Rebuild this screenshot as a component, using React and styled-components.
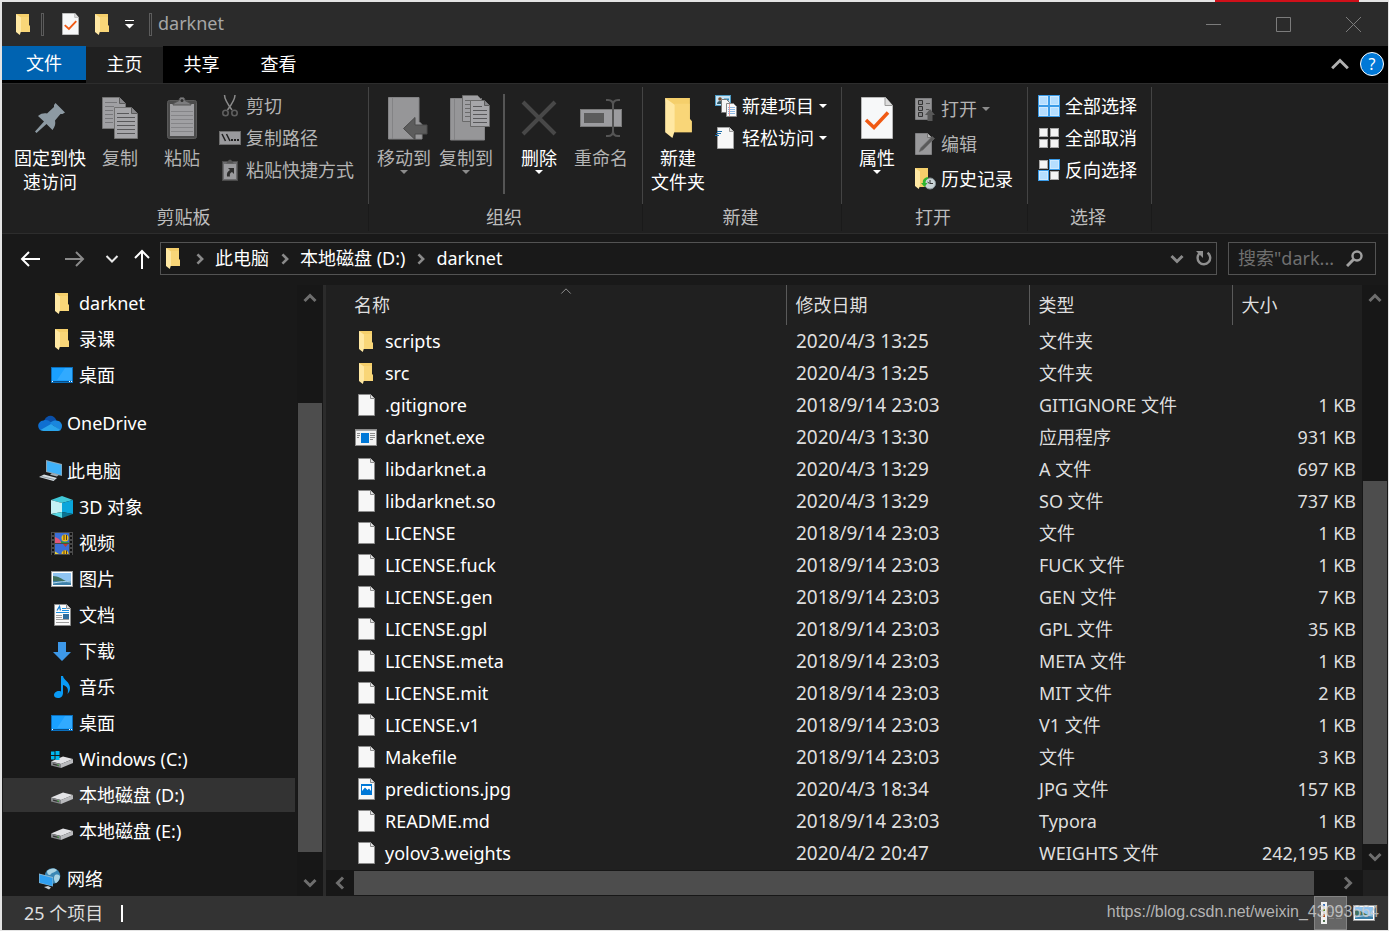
import React, { useState } from "react";
import styled, { createGlobalStyle } from "styled-components";

const GlobalStyle = createGlobalStyle`
  * {
    box-sizing: border-box;
  }

  body {
    margin: 0;
    background-color: #e4e4e4;
    font-family: "Noto Sans", "Noto Sans CJK SC", sans-serif;
    font-size: 18px;
    line-height: 24px;
    color: #ffffff;
  }

  button,
  input {
    font: inherit;
    color: inherit;
    border: none;
    background: none;
    padding: 0;
    margin: 0;
  }

  svg {
    display: block;
    flex: none;
  }
`;

/* ---------- Window ---------- */

const Desktop = styled.div`
  display: flex;
  min-height: 100vh;
  padding: 2px 1px 1px 2px;
  background: linear-gradient(90deg, transparent 60%, #d0101a 60%) top right 30px / 360px 2px
    no-repeat;
`;

const Window = styled.div`
  flex: 1;
  min-width: 0;
  display: flex;
  flex-direction: column;
  background-color: #191919;
`;

const TitleBar = styled.header`
  display: flex;
  align-items: center;
  height: 44px;
  padding-left: 14px;
  background-color: #2b2b2b;
`;

const QuickButton = styled.button`
  display: flex;
  margin-left: ${(p) => p.$space || 0}px;
`;

const TitleDivider = styled.span`
  width: 3px;
  height: 23px;
  margin-left: ${(p) => p.$space}px;
  border: 1px solid #5c5c5c;
`;

const Title = styled.h1`
  flex: 1;
  margin: 0 0 0 6px;
  padding-bottom: 2px;
  font-size: 18px;
  font-weight: 400;
  color: #a6a6a6;
`;

const WindowButton = styled.button`
  display: flex;
  align-items: center;
  justify-content: center;
  width: 70px;
  height: 44px;

  &:hover {
    background-color: #3f3f3f;
  }
`;

/* ---------- Tabs ---------- */

const TabBar = styled.nav`
  display: flex;
  align-items: flex-start;
  height: 37px;
  background-color: #000000;
`;

const FileTab = styled.button`
  width: 84px;
  height: 34px;
  background-color: #0063b1;
`;

const Tab = styled.button`
  width: 77px;
  height: 37px;
  padding-bottom: 2px;
  border-top: 1px solid ${(p) => (p.$active ? "#2b2b2b" : "#000000")};
  background-color: ${(p) => (p.$active ? "#202020" : "#000000")};
`;

const TabTools = styled.div`
  display: flex;
  align-items: center;
  gap: 10px;
  height: 36px;
  margin-left: auto;
  padding-right: 4px;
`;

const HelpButton = styled.button`
  width: 24px;
  height: 24px;
  border: 1px solid #ffffff;
  border-radius: 50%;
  background-color: #0078d7;
  font-size: 16px;
  line-height: 20px;
`;

/* ---------- Ribbon ---------- */

const Ribbon = styled.section`
  display: flex;
  height: 151px;
  padding: 3px 0 2px;
  border-top: 1px solid #2d2d2d;
  border-bottom: 1px solid #2d2d2d;
  background-color: #202020;
`;

const Group = styled.div`
  display: flex;
  flex-direction: column;
  width: ${(p) => p.$width}px;
  background: linear-gradient(#444444 117px, #1a1a1a 117px) right / 1px 100% no-repeat;
`;

const GroupBody = styled.div`
  display: flex;
  height: 118px;
  padding: 3px 0 0 ${(p) => p.$pad || 4}px;
`;

const GroupLabel = styled.div`
  padding-right: 4px;
  text-align: center;
  color: #bdbdbd;
`;

const BigButton = styled.button`
  display: flex;
  flex-direction: column;
  align-items: center;
  justify-content: flex-start;
  width: ${(p) => p.$width || 62}px;
  color: #ffffff;
  white-space: pre-line;

  &:disabled {
    color: #b4b4b4;
  }
`;

const BigIcon = styled.span`
  display: flex;
  align-items: center;
  justify-content: center;
  height: 56px;
`;

const GroupDivider = styled.span`
  width: 2px;
  height: 100px;
  margin: 4px 3px 0 6px;
  background-color: #555555;
`;

const SmallList = styled.div`
  display: flex;
  flex-direction: column;
  gap: ${(p) => p.$gap || 8}px;
  padding: ${(p) => p.$top || 4}px 0 0 ${(p) => p.$left || 0}px;
`;

const SmallButton = styled.button`
  display: flex;
  align-items: center;
  gap: 5px;
  height: 24px;
  color: #ffffff;
  white-space: nowrap;

  &:disabled {
    color: #b4b4b4;
  }
`;

const SmallIcon = styled.span`
  display: flex;
  justify-content: center;
  width: 22px;
`;

/* ---------- Address bar ---------- */

const AddressRow = styled.div`
  display: flex;
  align-items: center;
  height: 51px;
  padding: 0 12px 2px 14px;
`;

const NavButtons = styled.div`
  display: flex;
  align-items: center;
  gap: 6px;
`;

const NavButton = styled.button`
  display: flex;
  justify-content: center;
  width: ${(p) => p.$width}px;
`;

const AddressBox = styled.div`
  flex: 1;
  display: flex;
  align-items: center;
  height: 33px;
  padding: 0 4px 0 5px;
  border: 1px solid #535353;
`;

const AddressIcon = styled.span`
  width: 18px;
`;

const Crumb = styled.a`
  padding-bottom: 2px;
  color: #ffffff;
  text-decoration: none;
`;

const CrumbArrow = styled.span`
  display: flex;
  justify-content: center;
  width: 31px;
`;

const AddressTools = styled.div`
  display: flex;
  align-items: center;
  gap: 12px;
  margin-left: auto;
`;

const SearchBox = styled.label`
  display: flex;
  align-items: center;
  width: 148px;
  height: 33px;
  margin-left: 11px;
  padding: 0 12px 0 9px;
  border: 1px solid #535353;
`;

const SearchInput = styled.input`
  flex: 1;
  min-width: 0;
  padding-bottom: 2px;
  outline: none;

  &::placeholder {
    color: #6f6f6f;
    opacity: 1;
  }
`;

/* ---------- Content ---------- */

const Content = styled.div`
  flex: 1;
  display: flex;
  height: 611px;
`;

const Sidebar = styled.aside`
  display: flex;
  width: 324px;
  height: 611px;
  overflow: hidden;
  border-right: 3px solid #2b2b2b;
`;

const Tree = styled.div`
  flex: 1;
  display: flex;
  flex-direction: column;
  gap: 2px;
  padding: 1px 2px 0 1px;
`;

const TreeItem = styled.a`
  flex: none;
  display: flex;
  align-items: center;
  gap: 5px;
  height: 34px;
  margin-top: ${(p) => (p.$section ? 12 : 0)}px;
  padding-left: ${(p) => (p.$root ? 35 : 47)}px;
  color: #ffffff;
  text-decoration: none;
  background-color: ${(p) => (p.$selected ? "#333333" : "transparent")};

  &:hover {
    background-color: #333333;
  }
`;

const TreeIcon = styled.span`
  display: flex;
  justify-content: center;
  width: 24px;
`;

const VScroll = styled.div`
  display: flex;
  flex-direction: column;
  align-items: center;
  width: 26px;
  flex: none;
  background-color: #171717;
`;

const ScrollButton = styled.button`
  display: flex;
  align-items: center;
  justify-content: center;
  width: 28px;
  height: 26px;
`;

const VThumb = styled.div`
  width: 24px;
  height: ${(p) => p.$size}px;
  margin-top: ${(p) => p.$offset}px;
  margin-bottom: auto;
  background-color: #4d4d4d;
`;

const Main = styled.main`
  flex: 1;
  min-width: 0;
  display: flex;
  flex-direction: column;
  background-color: #202020;
`;

const ListArea = styled.div`
  flex: 1;
  display: flex;
`;

const TableWrap = styled.div`
  flex: 1;
  min-width: 0;
`;

const Table = styled.table`
  width: 100%;
  table-layout: fixed;
  border-collapse: collapse;
`;

const HeadCell = styled.th`
  position: relative;
  width: ${(p) => (p.$width ? `${p.$width}px` : "auto")};
  height: 40px;
  padding: 0 0 0 ${(p) => (p.$width ? 9 : 28)}px;
  border-left: ${(p) => (p.$width ? "1px solid #5a5a5a" : "none")};
  font-weight: 400;
  text-align: left;
  color: #dedede;
`;

const SortMark = styled.span`
  position: absolute;
  top: 0;
  left: 51%;
  display: flex;
`;

const Cell = styled.td`
  height: 32px;
  padding: 0 6px 0 10px;
  text-align: ${(p) => (p.$right ? "right" : "left")};
  color: #dedede;
  white-space: nowrap;
`;

const DateCell = styled(Cell)`
  font-size: 19px;
`;

const NameCell = styled(Cell)`
  padding-left: 28px;
  color: #ffffff;
`;

const FileName = styled.span`
  display: flex;
  align-items: center;
  gap: 7px;
`;

const FileIconSlot = styled.span`
  display: flex;
  justify-content: center;
  width: 24px;
`;

const HScroll = styled.div`
  display: flex;
  align-items: center;
  height: 26px;
  padding-right: 26px;
  background: linear-gradient(#202020, #202020) right / 25px 100% no-repeat #171717;
`;

const HTrack = styled.div`
  flex: 1;
`;

const HThumb = styled.div`
  width: 98%;
  height: 24px;
  background-color: #4d4d4d;
`;

/* ---------- Status bar ---------- */

const StatusBar = styled.footer`
  position: relative;
  display: flex;
  align-items: center;
  height: 34px;
  padding: 0 13px 0 22px;
  background-color: #333333;
  color: #dedede;
`;

const StatusDivider = styled.span`
  width: 2px;
  height: 17px;
  margin-left: 18px;
  background-color: #ffffff;
`;

const ViewButtons = styled.div`
  display: flex;
  align-items: center;
  gap: 6px;
  margin-left: auto;
`;

const ViewButton = styled.button`
  display: flex;
  align-items: center;
  justify-content: center;
  height: 34px;
  width: ${(p) => (p.$active ? 33 : 22)}px;
  border: ${(p) => (p.$active ? "1px solid #838383" : "none")};
  background-color: ${(p) => (p.$active ? "#666666" : "transparent")};
`;

const Watermark = styled.span`
  position: absolute;
  right: 9px;
  top: 4px;
  font-family: "Liberation Sans", Arial, sans-serif;
  font-size: 16px;
  color: rgba(205, 205, 205, 0.85);
  pointer-events: none;
`;

/* ---------- Icons ---------- */

const FolderIcon = ({ width = 14, height = 21 }) => (
  <svg width={width} height={height} viewBox="0 0 14 21">
    <path d="M0 0h13v11l1 1.2V18H3z" fill="#f5cf6b" />
    <path d="M5 3h8v8l1 1.2V18H5z" fill="#fbdb80" opacity=".6" />
    <path d="M0 0l5 3.5v13.8L3.8 21 0 18z" fill="#ffe8a3" />
  </svg>
);

const FileIcon = () => (
  <svg width="17" height="22" viewBox="0 0 17 22">
    <path d="M.5.5h12l4 4v17H.5z" fill="#f7f7f7" stroke="#8c8c8c" />
    <path d="M12.5.5v4h4" fill="#e2e2e2" stroke="#8c8c8c" />
  </svg>
);

const ImageFileIcon = () => (
  <svg width="17" height="22" viewBox="0 0 17 22">
    <path d="M.5.5h12l4 4v17H.5z" fill="#f7f7f7" stroke="#8c8c8c" />
    <path d="M12.5.5v4h4" fill="#e2e2e2" stroke="#8c8c8c" />
    <rect x="3" y="6" width="11" height="11" fill="#0078d7" />
    <path d="M4 8h9v5l-2-2.500-1.500 1.500L7 9.500 4 13z" fill="#fff" />
  </svg>
);

const ExeIcon = () => (
  <svg width="22" height="17" viewBox="0 0 22 17">
    <rect x=".5" y=".5" width="21" height="16" fill="#f2f2f2" stroke="#8c8c8c" />
    <path d="M1 1.500h20" stroke="#a8a8a8" />
    <rect x="6" y="4" width="8" height="10" fill="#0078d7" />
    <path d="M2 4.500h3M2 6.500h3M2 8.500h2M15 4.500h5M15 6.500h5M15 8.500h5M15 10.500h3" stroke="#8c8c8c" />
  </svg>
);

const CheckDocIcon = ({ width = 17, height = 22 }) => (
  <svg width={width} height={height} viewBox="0 0 32 42">
    <path d="M.5.5h24l7 8v33H.5z" fill="#f7f8f9" stroke="#b5b5b5" />
    <path d="M24 .5v8h7.500" fill="#dcdcdc" stroke="#999" />
    <path d="M5 23l8 7.500L27 15.500" fill="none" stroke="#f05a14" strokeWidth="3.500" />
  </svg>
);

const PinIcon = () => (
  <svg width="30" height="30" viewBox="0 0 30 30">
    <path
      d="M20.500 0L30 9.500l-2.500 1.500h-2L20 17.500c.8 3.500 0 6-2.500 9.500L11.500 21 1.500 30 0 28.500 9 18.500 3 13c3-2.500 6-3 9-2.500L19 4V2z"
      fill="#8d9aa3"
    />
  </svg>
);

const CopyIcon = () => (
  <svg width="36" height="42" viewBox="0 0 36 42">
    <path d="M.5.500h17l6 6v25H.5z" fill="#a0a0a3" stroke="#737373" />
    <path d="M17.500.500v6h6" fill="#88888b" stroke="#5c5c5c" />
    <path d="M3 5.500h12M3 9.500h9M3 13.500h8M3 17.500h8M3 21.500h8M3 25.500h8" stroke="#77777a" />
    <path d="M12.500 10.500h17l6 6v25h-23z" fill="#a6a6a9" stroke="#737373" />
    <path d="M29.500 10.500v6h6" fill="#88888b" stroke="#5c5c5c" />
    <path d="M15 16.500h12M15 20.500h18M15 24.500h18M15 28.500h18M15 32.500h18M15 36.500h18" stroke="#58585a" />
  </svg>
);

const PasteIcon = () => (
  <svg width="30" height="42" viewBox="0 0 30 42">
    <rect x=".5" y="3.500" width="29" height="38" rx="2" fill="#4b4b4b" stroke="#5a5a5a" />
    <path d="M3 7h24v32H3z" fill="#a0a0a3" />
    <path d="M4 14.500h22M4 18.500h22M4 22.500h22M4 26.500h22M4 30.500h22M4 34.500h22" stroke="#858588" />
    <path d="M6 8c0-2 4-3 6-4.500 0-4.500 6-4.500 6 0 2 1.500 6 2.500 6 4.500z" fill="#7c7c7e" stroke="#555" />
    <circle cx="15" cy="3.500" r="1.500" fill="#303030" />
  </svg>
);

const MoveToIcon = () => (
  <svg width="48" height="43" viewBox="-8 0 48 43">
    <path d="M.5.500h30.500v24l3 3v14.500H.5z" fill="#969698" stroke="#838385" />
    <path d="M4.500 1v41" stroke="#838385" />
    <path d="M15.500 31.500L27 20.500v7.500h12v9H27v5.500z" fill="#5c5c5c" stroke="#4a4a4a" />
  </svg>
);

const CopyToIcon = () => (
  <svg width="48" height="46" viewBox="-8 0 48 46">
    <path d="M.5 3.500h31v24l3 3v14.500H.5z" fill="#969698" stroke="#838385" />
    <path d="M4.500 4v41" stroke="#838385" />
    <path d="M12.500.500h15l4 4v22h-19z" fill="#a0a0a3" stroke="#6a6a6a" />
    <path d="M15 5.500h8M15 9.500h5M15 13.500h5M15 17.500h5M15 21.500h5" stroke="#6a6a6a" />
    <path d="M20.500 5.500h14l5 5v21h-19z" fill="#a6a6a9" stroke="#6a6a6a" />
    <path d="M34.500 5.500v5h5" fill="#88888b" stroke="#5c5c5c" />
    <path d="M23 11.500h9M23 15.500h14M23 19.500h14M23 23.500h14M23 27.500h14" stroke="#58585a" />
  </svg>
);

const DeleteIcon = () => (
  <svg width="36" height="36" viewBox="0 0 36 36">
    <path d="M2 2l32 32M34 2L2 34" stroke="#484848" strokeWidth="4" />
  </svg>
);

const RenameIcon = () => (
  <svg width="42" height="38" viewBox="0 0 42 38">
    <rect x=".5" y="10.500" width="41" height="17" fill="#9c9c9f" stroke="#7a7a7a" />
    <rect x="4" y="14" width="20" height="10" fill="#5c5c5c" />
    <path
      d="M26 1h2c3 0 5 2 5 5v26c0 3-2 5-5 5h-2M40 1h-2c-3 0-5 2-5 5M40 37h-2c-3 0-5-2-5-5"
      fill="none"
      stroke="#555"
      strokeWidth="2"
    />
  </svg>
);

const CutIcon = () => (
  <svg width="16" height="22" viewBox="0 0 16 22" fill="none">
    <path d="M2.500 0c0 4 1.500 7 7.500 15M13 0c0 4-1.500 7-7.500 15" stroke="#8a8a8a" strokeWidth="1.500" />
    <circle cx="3.500" cy="18" r="2.700" stroke="#5f5f5f" strokeWidth="1.600" />
    <circle cx="12.500" cy="18" r="2.700" stroke="#5f5f5f" strokeWidth="1.600" />
  </svg>
);

const PathIcon = () => (
  <svg width="22" height="14" viewBox="0 0 22 14">
    <rect x=".5" y=".5" width="21" height="13" fill="#9a9a9d" stroke="#6e6e6e" />
    <path d="M3 3l3.500 7M7.500 3L11 10" stroke="#222" strokeWidth="1.500" />
    <path d="M12 9h2M15 9h2M18 9h2" stroke="#222" strokeWidth="2" />
  </svg>
);

const PasteLinkIcon = () => (
  <svg width="16" height="22" viewBox="0 0 16 22">
    <rect x=".5" y="2.500" width="15" height="19" fill="#6c6c6e" stroke="#4a4a4a" />
    <rect x="2" y="5" width="12" height="15" fill="#9a9a9d" />
    <path d="M4 4.500l2-2c0-2.500 4-2.500 4 0l2 2z" fill="#555" />
    <path d="M6 9h6v6l-2-2c-2 1-2.500 2-2 4.500h-3C4.500 14 5.500 12.500 8 11z" fill="#2e2e2e" />
  </svg>
);

const NewItemIcon = () => (
  <svg width="22" height="22" viewBox="0 0 22 22">
    <rect x=".5" y=".5" width="15" height="10" fill="#c8e4f5" stroke="#4d9bc4" />
    <circle cx="5" cy="4" r="1.800" fill="#7a4b2a" />
    <path d="M2 9c0-4 6-4 6 0z" fill="#30525f" />
    <path d="M9 4.500h5" stroke="#2e86b5" strokeWidth="2" />
    <path d="M6.500 4.500h5l3 3v10h-8z" fill="#f5f5f5" stroke="#777" />
    <path d="M11.500 8.500h7l3 3v10h-10z" fill="#fafafa" stroke="#888" />
    <path d="M13 12.500h7M13 14.500h7M13 16.500h7M13 18.500h7" stroke="#8db9e6" />
    <path d="M14.500 9v12" stroke="#e6a0a0" />
  </svg>
);

const EasyAccessIcon = () => (
  <svg width="22" height="22" viewBox="0 0 22 22">
    <path d="M2.500.500h12l4 4v17h-16z" fill="#f7f7f7" stroke="#a0a0a0" />
    <path d="M14.500.500v4h4" fill="#ddd" stroke="#999" />
    <path d="M2 4.500h5M1 6.500h5M0 8.500h4" stroke="#1e6ea8" />
  </svg>
);

const OpenIcon = () => (
  <svg width="20" height="23" viewBox="0 0 20 23">
    <path d="M.5.500h16v21H.5z" fill="#949496" stroke="#7c7c7e" />
    <path d="M3.500 2.500h4v4h-4zM3.500 8.500h4v4h-4zM3.500 14.500h4v4h-4z" fill="#858587" stroke="#333" />
    <path d="M11 5.500h4M11 11.500h3" stroke="#555" />
    <path d="M15 11l5 6h-2.500v6h-5v-6H10z" fill="#585858" />
  </svg>
);

const EditIcon = () => (
  <svg width="20" height="22" viewBox="0 0 20 22">
    <path d="M.5.500h12l4 4v17H.5z" fill="#99999b" stroke="#808082" />
    <path d="M12.500.500v4h4" fill="#bbb" stroke="#777" />
    <path d="M4 19l1.500-4L17 3.500l2.500 2L8 17z" fill="#5a5a5a" stroke="#777" strokeWidth=".5" />
  </svg>
);

const HistoryIcon = () => (
  <svg width="21" height="22" viewBox="0 0 21 22">
    <path d="M0 0h13v11l1 1.200V19H3z" fill="#f5cf6b" />
    <path d="M0 0l5 3.500v13.800L3.800 21 0 18z" fill="#ffe8a3" />
    <circle cx="15" cy="15.500" r="5.500" fill="#c9d3d6" stroke="#8a9599" />
    <path d="M15 12v3.500h3M12.500 14l2 1.500" fill="none" stroke="#333" />
    <path d="M12.500 9C8 10.500 7.500 13 8 15H6l3.500 4 3-4h-2c0-2 .5-3.500 3-4.500z" fill="#2fb52f" />
  </svg>
);

// Cuadrícula 2x2: los cuadros marcados van en azul
const GridIcon = ({ on = [] }) => (
  <svg width="22" height="22" viewBox="0 0 22 22">
    {[0, 1, 2, 3].map((i) => {
      const x = (i % 2) * 11;
      const y = i > 1 ? 11 : 0;
      return on.includes(i) ? (
        <g key={i}>
          <rect x={x} y={y} width="11" height="11" fill="#3a9be8" />
          <rect x={x + 1.5} y={y + 1.5} width="8" height="8" fill="#b5deff" stroke="#cfeaff" />
        </g>
      ) : (
        <rect key={i} x={x + 1.5} y={y + 1.5} width="8" height="8" fill="#f4f4f4" stroke="#a8a8a8" />
      );
    })}
  </svg>
);

const DesktopIcon = () => (
  <svg width="22" height="16" viewBox="0 0 22 16">
    <rect x=".5" y=".5" width="21" height="15" fill="#1aa0ff" stroke="#0a6fbd" />
    <path d="M14 1h7v12H6z" fill="#41b1ff" opacity=".6" />
    <path d="M1 14.500h20" stroke="#0a4d86" />
    <path d="M1 14.500h1M18 14.500h1M20 14.500h1" stroke="#fff" />
  </svg>
);

const CloudIcon = () => (
  <svg width="24" height="16" viewBox="0 0 24 16">
    <path d="M6 6C8-.5 16-1.500 18.500 5.500L13 10z" fill="#0a4fa8" />
    <path d="M5.500 5.500c3-1 5 0 7 1.500l4 3L3 15.500C-1.500 13.500-.5 6 5.500 5.500z" fill="#0f6fd1" />
    <path d="M18 5.500c4 0 6 3 6 5.500s-1 3.500-2 4.500L12 8c2-2 4-2.500 6-2.500z" fill="#1a86dd" />
    <path d="M2.500 15L13 9l9.500 6c-.8.700-2 1-3 1H5.500c-1 0-2-.3-3-1z" fill="#2aa5ec" />
  </svg>
);

const ComputerIcon = () => (
  <svg width="24" height="22" viewBox="0 0 24 22">
    <path d="M8 0l16 4v12L8 12z" fill="#8fa6b4" />
    <path d="M9 1.200L23.300 5v10L9 11.300z" fill="#3fb2fa" />
    <path d="M14 13l7 1.800-2 1.700-7-1.800z" fill="#9eacb5" />
    <path d="M6 14.500l13 3.500-3.500 3L1 17z" fill="#d5dde2" />
    <path d="M3.500 16.500l13 3" stroke="#8e9ba3" />
  </svg>
);

const CubeIcon = () => (
  <svg width="22" height="22" viewBox="0 0 22 22">
    <path d="M0 4l11-4 11 4-11 3z" fill="#40c8d8" />
    <path d="M0 4l11 3v9L0 18z" fill="#c6f2f4" />
    <path d="M22 4L11 7v9l11 2z" fill="#0aa6dc" />
    <path d="M0 18l11-2v6z" fill="#56d8e4" />
    <path d="M22 18l-11-2v6z" fill="#0a7391" />
  </svg>
);

const VideoIcon = () => (
  <svg width="22" height="23" viewBox="0 0 22 23">
    <path d="M0 0h22v23H0z" fill="#4a4a4a" />
    <path d="M2 1v22M20 1v22" stroke="#111" strokeWidth="2" strokeDasharray="2 2" />
    <path d="M4 1h14v10H4zM4 12h14v10H4z" fill="#3b6fd6" />
    <path d="M4 5l4 2 3 4H4z" fill="#e0577a" />
    <circle cx="14" cy="6" r="3.500" fill="#f2c21a" />
    <path d="M13 3v5M15.500 3v5" stroke="#5a3a10" />
    <path d="M10 9l3 1h4l1 1h-8z" fill="#2f9a3a" />
    <path d="M12 12h5l-2.500 3z" fill="#c23a2b" />
    <path d="M10.500 22c0-5 7-5 7 0z" fill="#f2c21a" />
    <path d="M13 18.500V22M15.500 18.500V22" stroke="#5a3a10" />
    <path d="M4 19.500l4 2.500H4z" fill="#e8d23a" />
  </svg>
);

const PictureIcon = () => (
  <svg width="22" height="16" viewBox="0 0 22 16">
    <rect x=".5" y=".5" width="21" height="15" fill="#fff" stroke="#9a9a9a" />
    <rect x="2" y="2" width="18" height="12" fill="#8fc4f2" />
    <path d="M2 5c5 0 9 3 13 5H2z" fill="#40705e" />
    <path d="M2 10h18v4H2z" fill="#3c7fa8" />
    <path d="M2 12c7-1 12-2 18-1" stroke="#b8dcee" fill="none" />
  </svg>
);

const DocumentIcon = () => (
  <svg width="17" height="22" viewBox="0 0 17 22">
    <path d="M.5.500h12l4 4v17H.5z" fill="#fbfbfb" stroke="#8c8c8c" />
    <path d="M12.500.500v4h4" fill="#ddd" stroke="#8c8c8c" />
    <path d="M3 6.500l2.500-4 1 4" stroke="#1a7fd0" fill="none" strokeWidth="1.300" />
    <path d="M8 4.500h4M8 6.500h7M2 8.500h13" stroke="#1a8fe0" />
    <path d="M2 11.500h6M2 13.500h6M2 15.500h13M2 18.500h13" stroke="#a0a0a0" />
    <rect x="9" y="10" width="6" height="5" fill="#2f6d9c" />
  </svg>
);

const DownloadIcon = () => (
  <svg width="18" height="19" viewBox="0 0 18 19">
    <path d="M5 0h8v10h5l-9 9-9-9h5z" fill="#3d98e8" />
  </svg>
);

const MusicIcon = () => (
  <svg width="16" height="22" viewBox="0 0 16 22">
    <path
      d="M7 0h2c.5 4 7 6 7 12 0 3-1 4.500-2.500 6 1.500-5-.5-8-4.500-9v8c0 3-2 5-5 5-2.500 0-4-1.200-4-3 0-3 4-5 7-3.500z"
      fill="#0a9bf5"
    />
  </svg>
);

const DriveIcon = ({ windows }) => (
  <svg width="22" height="17" viewBox="0 0 22 17">
    <path d="M0 10.500L12 5.500l10 2.500-12 5z" fill="#e2e2e5" />
    <path d="M0 10.500l10 2.500v4L0 14.500z" fill="#85878a" />
    <path d="M10 13l12-5v4l-12 5z" fill="#b9babd" />
    <path d="M2 12.500l6 1.500v1.200L2 13.700z" fill="#333" />
    <path d="M6.500 14h1.500" stroke="#4fd04f" />
    {windows && (
      <path d="M0 .5h3.500v3.500H0zM4.500 0H8.500v4H4.500zM0 5h3.500v3.500H0zM4.500 5H8.500v4H4.500z" fill="#00b7f0" />
    )}
  </svg>
);

const NetworkIcon = () => (
  <svg width="22" height="22" viewBox="0 0 22 22">
    <circle cx="13.500" cy="8" r="7.800" fill="#3a87b5" />
    <path d="M8 3c3-3 8-3.500 10-1-2 3-5 2-6 4s-4 1-4-3zM16 7c3-1 5 0 5 2-1 4-3 6-4.500 6-2-3-2-6-.5-8z" fill="#a9d3e3" />
    <path d="M0 5.500l14 3.500v9.500L0 15z" fill="#8fb8d0" />
    <path d="M.5 6.500L13.500 10v8L.5 14.500z" fill="#2f9ff0" />
    <path d="M5 19l4-1 3 1.500-2 2z" fill="#c3ccd1" />
  </svg>
);

const Chevron = ({ dir = "down", size = 14, color = "#6e6e6e", stroke = 3 }) => {
  const angle = { down: 0, left: 90, up: 180, right: 270 }[dir];
  return (
    <svg width={size} height={size} viewBox="0 0 14 14">
      <path
        d="M1.500 4L7 9.500 12.500 4"
        fill="none"
        stroke={color}
        strokeWidth={stroke}
        transform={`rotate(${angle} 7 7)`}
      />
    </svg>
  );
};

const Caret = ({ color = "#ffffff" }) => (
  <svg width="8" height="4" viewBox="0 0 8 4">
    <path d="M0 0h8L4 4z" fill={color} />
  </svg>
);

/* ---------- Data ---------- */

const treeItems = [
  { name: "darknet", icon: <FolderIcon /> },
  { name: "录课", icon: <FolderIcon /> },
  { name: "桌面", icon: <DesktopIcon /> },
  { name: "OneDrive", icon: <CloudIcon />, root: true, section: true },
  { name: "此电脑", icon: <ComputerIcon />, root: true, section: true },
  { name: "3D 对象", icon: <CubeIcon /> },
  { name: "视频", icon: <VideoIcon /> },
  { name: "图片", icon: <PictureIcon /> },
  { name: "文档", icon: <DocumentIcon /> },
  { name: "下载", icon: <DownloadIcon /> },
  { name: "音乐", icon: <MusicIcon /> },
  { name: "桌面", icon: <DesktopIcon /> },
  { name: "Windows (C:)", icon: <DriveIcon windows /> },
  { name: "本地磁盘 (D:)", icon: <DriveIcon /> },
  { name: "本地磁盘 (E:)", icon: <DriveIcon /> },
  { name: "网络", icon: <NetworkIcon />, root: true, section: true },
];

const files = [
  ["scripts", "2020/4/3 13:25", "文件夹", "", "folder"],
  ["src", "2020/4/3 13:25", "文件夹", "", "folder"],
  [".gitignore", "2018/9/14 23:03", "GITIGNORE 文件", "1 KB"],
  ["darknet.exe", "2020/4/3 13:30", "应用程序", "931 KB", "exe"],
  ["libdarknet.a", "2020/4/3 13:29", "A 文件", "697 KB"],
  ["libdarknet.so", "2020/4/3 13:29", "SO 文件", "737 KB"],
  ["LICENSE", "2018/9/14 23:03", "文件", "1 KB"],
  ["LICENSE.fuck", "2018/9/14 23:03", "FUCK 文件", "1 KB"],
  ["LICENSE.gen", "2018/9/14 23:03", "GEN 文件", "7 KB"],
  ["LICENSE.gpl", "2018/9/14 23:03", "GPL 文件", "35 KB"],
  ["LICENSE.meta", "2018/9/14 23:03", "META 文件", "1 KB"],
  ["LICENSE.mit", "2018/9/14 23:03", "MIT 文件", "2 KB"],
  ["LICENSE.v1", "2018/9/14 23:03", "V1 文件", "1 KB"],
  ["Makefile", "2018/9/14 23:03", "文件", "3 KB"],
  ["predictions.jpg", "2020/4/3 18:34", "JPG 文件", "157 KB", "image"],
  ["README.md", "2018/9/14 23:03", "Typora", "1 KB"],
  ["yolov3.weights", "2020/4/2 20:47", "WEIGHTS 文件", "242,195 KB"],
];

const fileIcons = {
  folder: <FolderIcon />,
  exe: <ExeIcon />,
  image: <ImageFileIcon />,
};

const tabs = ["主页", "共享", "查看"];

/* ---------- Pieces ---------- */

const Big = ({ icon, label, width, disabled, caret }) => (
  <BigButton $width={width} disabled={disabled}>
    <BigIcon>{icon}</BigIcon>
    {label}
    {caret && <Caret color={disabled ? "#8c8c8c" : "#ffffff"} />}
  </BigButton>
);

const Small = ({ icon, label, disabled, caret }) => (
  <SmallButton disabled={disabled}>
    <SmallIcon>{icon}</SmallIcon>
    {label}
    {caret && <Caret color={disabled ? "#8c8c8c" : "#ffffff"} />}
  </SmallButton>
);

const App = () => {
  const [activeTab, setActiveTab] = useState("主页");
  const [selected, setSelected] = useState(13);
  const [search, setSearch] = useState("");

  const handleSelect = (e, index) => {
    e.preventDefault();
    setSelected(index);
  };

  return (
    <Desktop>
      <GlobalStyle />
      <Window>
        <TitleBar>
          <FolderIcon />
          <TitleDivider $space={11} />
          <QuickButton aria-label="属性" $space={18}>
            <CheckDocIcon />
          </QuickButton>
          <QuickButton aria-label="新建文件夹" $space={16}>
            <FolderIcon />
          </QuickButton>
          <QuickButton aria-label="自定义快速访问工具栏" $space={16}>
            <svg width="9" height="9" viewBox="0 0 9 9">
              <path d="M0 .5h9" stroke="#fff" />
              <path d="M0 4h9L4.500 8.500z" fill="#fff" />
            </svg>
          </QuickButton>
          <TitleDivider $space={15} />
          <Title>darknet</Title>
          <WindowButton aria-label="最小化">
            <svg width="15" height="15" viewBox="0 0 15 15">
              <path d="M0 7.500h15" stroke="#7c7c7c" />
            </svg>
          </WindowButton>
          <WindowButton aria-label="最大化">
            <svg width="15" height="15" viewBox="0 0 15 15">
              <path d="M.5.500h14v14H.5z" fill="none" stroke="#7c7c7c" />
            </svg>
          </WindowButton>
          <WindowButton aria-label="关闭">
            <svg width="15" height="15" viewBox="0 0 15 15">
              <path d="M0 0l15 15M15 0L0 15" stroke="#7c7c7c" />
            </svg>
          </WindowButton>
        </TitleBar>

        <TabBar>
          <FileTab>文件</FileTab>
          {tabs.map((tab) => (
            <Tab key={tab} $active={tab === activeTab} onClick={() => setActiveTab(tab)}>
              {tab}
            </Tab>
          ))}
          <TabTools>
            <QuickButton aria-label="最小化功能区">
              <Chevron dir="up" size={20} color="#b0b0b0" stroke={2} />
            </QuickButton>
            <HelpButton aria-label="帮助">?</HelpButton>
          </TabTools>
        </TabBar>

        <Ribbon>
          <Group $width={367}>
            <GroupBody $pad={9}>
              <Big icon={<PinIcon />} label={"固定到快\n速访问"} width={78} />
              <Big icon={<CopyIcon />} label="复制" disabled />
              <Big icon={<PasteIcon />} label="粘贴" disabled />
              <SmallList $left={6}>
                <Small icon={<CutIcon />} label="剪切" disabled />
                <Small icon={<PathIcon />} label="复制路径" disabled />
                <Small icon={<PasteLinkIcon />} label="粘贴快捷方式" disabled />
              </SmallList>
            </GroupBody>
            <GroupLabel>剪贴板</GroupLabel>
          </Group>
          <Group $width={274}>
            <GroupBody>
              <Big icon={<MoveToIcon />} label="移动到" disabled caret />
              <Big icon={<CopyToIcon />} label="复制到" disabled caret />
              <GroupDivider />
              <Big icon={<DeleteIcon />} label="删除" caret />
              <Big icon={<RenameIcon />} label="重命名" disabled />
            </GroupBody>
            <GroupLabel>组织</GroupLabel>
          </Group>
          <Group $width={199}>
            <GroupBody>
              <Big icon={<FolderIcon width={27} height={40} />} label={"新建\n文件夹"} />
              <SmallList $left={6}>
                <Small icon={<NewItemIcon />} label="新建项目" caret />
                <Small icon={<EasyAccessIcon />} label="轻松访问" caret />
              </SmallList>
            </GroupBody>
            <GroupLabel>新建</GroupLabel>
          </Group>
          <Group $width={186}>
            <GroupBody>
              <Big icon={<CheckDocIcon width={32} height={42} />} label="属性" caret />
              <SmallList $left={6} $gap={11} $top={7}>
                <Small icon={<OpenIcon />} label="打开" disabled caret />
                <Small icon={<EditIcon />} label="编辑" disabled />
                <Small icon={<HistoryIcon />} label="历史记录" />
              </SmallList>
            </GroupBody>
            <GroupLabel>打开</GroupLabel>
          </Group>
          <Group $width={124}>
            <GroupBody $pad={10}>
              <SmallList>
                <Small icon={<GridIcon on={[0, 1, 2, 3]} />} label="全部选择" />
                <Small icon={<GridIcon />} label="全部取消" />
                <Small icon={<GridIcon on={[1, 2]} />} label="反向选择" />
              </SmallList>
            </GroupBody>
            <GroupLabel>选择</GroupLabel>
          </Group>
        </Ribbon>

        <AddressRow>
          <NavButtons>
            <NavButton aria-label="后退" $width={28}>
              <svg width="20" height="16" viewBox="0 0 20 16">
                <path d="M20 8H2M9 1L2 8l7 7" fill="none" stroke="#fff" strokeWidth="2" />
              </svg>
            </NavButton>
            <NavButton aria-label="前进" $width={50}>
              <svg width="20" height="16" viewBox="0 0 20 16">
                <path d="M0 8h18M11 1l7 7-7 7" fill="none" stroke="#8a8a8a" strokeWidth="2" />
              </svg>
            </NavButton>
            <NavButton aria-label="最近浏览的位置" $width={12}>
              <Chevron color="#e8e8e8" stroke={2} />
            </NavButton>
            <NavButton aria-label="上移" $width={36}>
              <svg width="16" height="20" viewBox="0 0 16 20">
                <path d="M8 20V2M1 9l7-7 7 7" fill="none" stroke="#fff" strokeWidth="2" />
              </svg>
            </NavButton>
          </NavButtons>
          <AddressBox>
            <AddressIcon>
              <FolderIcon />
            </AddressIcon>
            <CrumbArrow>
              <Chevron dir="right" size={12} color="#8a8a8a" />
            </CrumbArrow>
            <Crumb href="#pc">此电脑</Crumb>
            <CrumbArrow>
              <Chevron dir="right" size={12} color="#8a8a8a" />
            </CrumbArrow>
            <Crumb href="#d">本地磁盘 (D:)</Crumb>
            <CrumbArrow>
              <Chevron dir="right" size={12} color="#8a8a8a" />
            </CrumbArrow>
            <Crumb href="#darknet">darknet</Crumb>
            <AddressTools>
              <QuickButton aria-label="以前的位置">
                <Chevron color="#8a8a8a" />
              </QuickButton>
              <QuickButton aria-label="刷新">
                <svg width="16" height="17" viewBox="0 0 16 17">
                  <path d="M11.500 2.800A6.300 6.300 0 1 1 4 3" fill="none" stroke="#8f8f8f" strokeWidth="2.400" />
                  <path d="M0 1h7v7z" fill="#8f8f8f" />
                </svg>
              </QuickButton>
            </AddressTools>
          </AddressBox>
          <SearchBox>
            <SearchInput
              type="text"
              aria-label="搜索"
              placeholder={'搜索"dark...'}
              value={search}
              onChange={(e) => setSearch(e.target.value)}
            />
            <svg width="17" height="17" viewBox="0 0 17 17">
              <circle cx="11" cy="6" r="4.500" fill="none" stroke="#a0a0a0" strokeWidth="2.400" />
              <path d="M7.500 9.500L1 16" stroke="#a0a0a0" strokeWidth="3" />
            </svg>
          </SearchBox>
        </AddressRow>

        <Content>
          <Sidebar>
            <Tree>
              {treeItems.map((item, index) => (
                <TreeItem
                  key={index}
                  href="#"
                  $root={item.root}
                  $section={item.section}
                  $selected={index === selected}
                  onClick={(e) => handleSelect(e, index)}
                >
                  <TreeIcon>{item.icon}</TreeIcon>
                  {item.name}
                </TreeItem>
              ))}
            </Tree>
            <VScroll>
              <ScrollButton aria-label="向上滚动">
                <Chevron dir="up" />
              </ScrollButton>
              <VThumb $size={449} $offset={92} />
              <ScrollButton aria-label="向下滚动">
                <Chevron />
              </ScrollButton>
            </VScroll>
          </Sidebar>

          <Main>
            <ListArea>
              <TableWrap>
                <Table>
                  <thead>
                    <tr>
                      <HeadCell>
                        名称
                        <SortMark>
                          <Chevron dir="up" size={12} color="#a0a0a0" stroke={1} />
                        </SortMark>
                      </HeadCell>
                      <HeadCell $width={243}>修改日期</HeadCell>
                      <HeadCell $width={203}>类型</HeadCell>
                      <HeadCell $width={130}>大小</HeadCell>
                    </tr>
                  </thead>
                  <tbody>
                    {files.map(([name, date, type, size, kind]) => (
                      <tr key={name}>
                        <NameCell>
                          <FileName>
                            <FileIconSlot>{fileIcons[kind] || <FileIcon />}</FileIconSlot>
                            {name}
                          </FileName>
                        </NameCell>
                        <DateCell>{date}</DateCell>
                        <Cell>{type}</Cell>
                        <Cell $right>{size}</Cell>
                      </tr>
                    ))}
                  </tbody>
                </Table>
              </TableWrap>
              <VScroll>
                <ScrollButton aria-label="向上滚动">
                  <Chevron dir="up" />
                </ScrollButton>
                <VThumb $size={363} $offset={170} />
                <ScrollButton aria-label="向下滚动">
                  <Chevron />
                </ScrollButton>
              </VScroll>
            </ListArea>
            <HScroll>
              <ScrollButton aria-label="向左滚动">
                <Chevron dir="left" />
              </ScrollButton>
              <HTrack>
                <HThumb />
              </HTrack>
              <ScrollButton aria-label="向右滚动">
                <Chevron dir="right" />
              </ScrollButton>
            </HScroll>
          </Main>
        </Content>

        <StatusBar>
          25 个项目
          <StatusDivider />
          <ViewButtons>
            <ViewButton aria-label="详细信息" $active>
              <svg width="22" height="22" viewBox="0 0 22 22">
                <path d="M1 0h6v22H1z" fill="#f0f0f0" />
                <path d="M3 2h2v2H3z" fill="#3a78c0" />
                <path d="M3 7h2v2H3z" fill="#4a8a30" />
                <path d="M3 12h2v3H3z" fill="#b04020" />
                <path d="M3 18h2v2H3z" fill="#507050" />
                <path d="M9 5.500h5M16 5.500h6M9 10.500h5M16 10.500h6M9 16.500h5M16 16.500h6" stroke="#808080" />
              </svg>
            </ViewButton>
            <ViewButton aria-label="大缩略图">
              <PictureIcon />
            </ViewButton>
          </ViewButtons>
          <Watermark>https://blog.csdn.net/weixin_43093664</Watermark>
        </StatusBar>
      </Window>
    </Desktop>
  );
};

export default App;
